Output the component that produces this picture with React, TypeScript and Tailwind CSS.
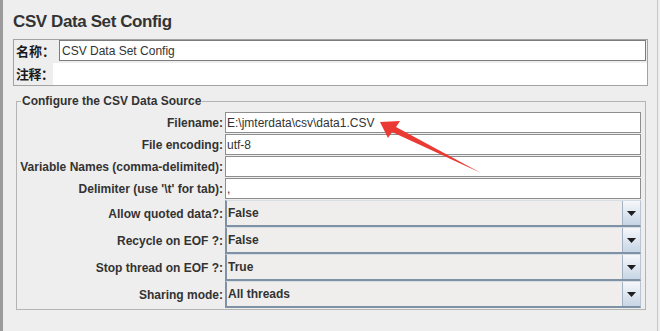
import React from "react";

const font = { fontFamily: '"Liberation Sans", Arial, "Noto Sans CJK SC", sans-serif' };

function TextRow({ label, value }: { label: string; value: string }) {
  return (
    <div className="flex h-[22px] items-start">
      <div className="w-[206px] h-[21px] flex items-center justify-end text-[12px] font-bold text-[#333333] whitespace-nowrap">
        {label}
      </div>
      <div className="ml-[2px] w-[416px] h-[21px] border border-[#8e8e8e] bg-white flex items-center pl-[1px] text-[12px] text-[#333333] whitespace-nowrap">
        {value}
      </div>
    </div>
  );
}

function ComboRow({ label, value }: { label: string; value: string }) {
  return (
    <div className="flex h-[27px]">
      <div className="w-[206px] flex items-center justify-end text-[12px] font-bold text-[#333333] whitespace-nowrap">
        {label}
      </div>
      <div className="ml-[2px] w-[416px] h-[27px] flex border-l-2 border-b-2 border-[#7f92a5] border-t border-t-[#d6dde5] border-r border-r-[#b9c4d0] bg-[#efeeec]">
        <div className="flex-1 flex items-center pl-[1px] text-[12px] font-bold text-[#333333]">{value}</div>
        <div className="w-[18px] h-full border-l border-[#a3b2c2] bg-gradient-to-b from-[#f6f8fb] to-[#c7d5e5] flex items-center justify-center">
          <svg width="9" height="5" viewBox="0 0 9 5">
            <polygon points="0,0 9,0 4.5,5" fill="#1e1e1e" />
          </svg>
        </div>
      </div>
    </div>
  );
}

const cjk = { fontFamily: '"Noto Sans CJK SC", sans-serif' };

export default function App() {
  return (
    <div
      className="relative w-[660px] h-[331px] bg-[#eeeeee] flex border-l-[3px] border-[#9b9b9b] overflow-hidden"
      style={font}
    >
      <div className="w-[654px] pl-[10px] flex flex-col">
        <div className="h-[39px] pt-[12px]">
          <div className="text-[17px] leading-[20px] font-bold text-[#333333] tracking-[-0.4px]">
            CSV Data Set Config
          </div>
        </div>

        <div className="w-[635px] h-[47px] border border-[#a3a3a3] flex flex-col">
          <div className="flex h-[21px]">
            <div className="w-[45px] shrink-0 pl-[2px] flex items-center whitespace-nowrap text-[13px] font-bold text-[#1a1a1a]" style={cjk}>
              名称：
            </div>
            <div className="w-[587px] h-[21px] border border-[#7c7c7c] bg-white flex items-center pl-[2px] text-[12px] text-[#333333]">
              CSV Data Set Config
            </div>
          </div>
          <div className="flex h-[22px] mt-[2px]">
            <div className="w-[39px] shrink-0 pl-[2px] flex items-center whitespace-nowrap text-[13px] font-bold text-[#1a1a1a] tracking-[-0.5px]" style={cjk}>
              注释：
            </div>
            <div className="relative w-[594px] h-[22px] bg-white"></div>
          </div>
        </div>

        <div className="relative mt-[15px] ml-[3px] w-[630px] h-[209px] border border-[#b4b4b4] pt-[10px] flex flex-col">
          <span className="absolute top-[-8px] left-[4px] px-[1px] bg-[#eeeeee] text-[12px] leading-[14px] font-bold text-[#333333]">
            Configure the CSV Data Source
          </span>
          <TextRow label="Filename:" value="E:\jmterdata\csv\data1.CSV" />
          <TextRow label="File encoding:" value="utf-8" />
          <TextRow label="Variable Names (comma-delimited):" value="" />
          <TextRow label="Delimiter (use '\t' for tab):" value="," />
          <ComboRow label="Allow quoted data?:" value="False" />
          <ComboRow label="Recycle on EOF ?:" value="False" />
          <ComboRow label="Stop thread on EOF ?:" value="True" />
          <ComboRow label="Sharing mode:" value="All threads" />
        </div>
      </div>
      <div className="w-px h-full bg-[#c8c8c8]"></div>
      <div className="w-[2px] h-full bg-[#eeeeee]"></div>

      <svg className="absolute top-0 left-[-3px] pointer-events-none" width="660" height="331" viewBox="0 0 660 331">
        <polygon
          points="380,122 400,121 396,127 481,173 392,132 388,138"
          fill="#ea3a33"
        />
      </svg>
    </div>
  );
}
